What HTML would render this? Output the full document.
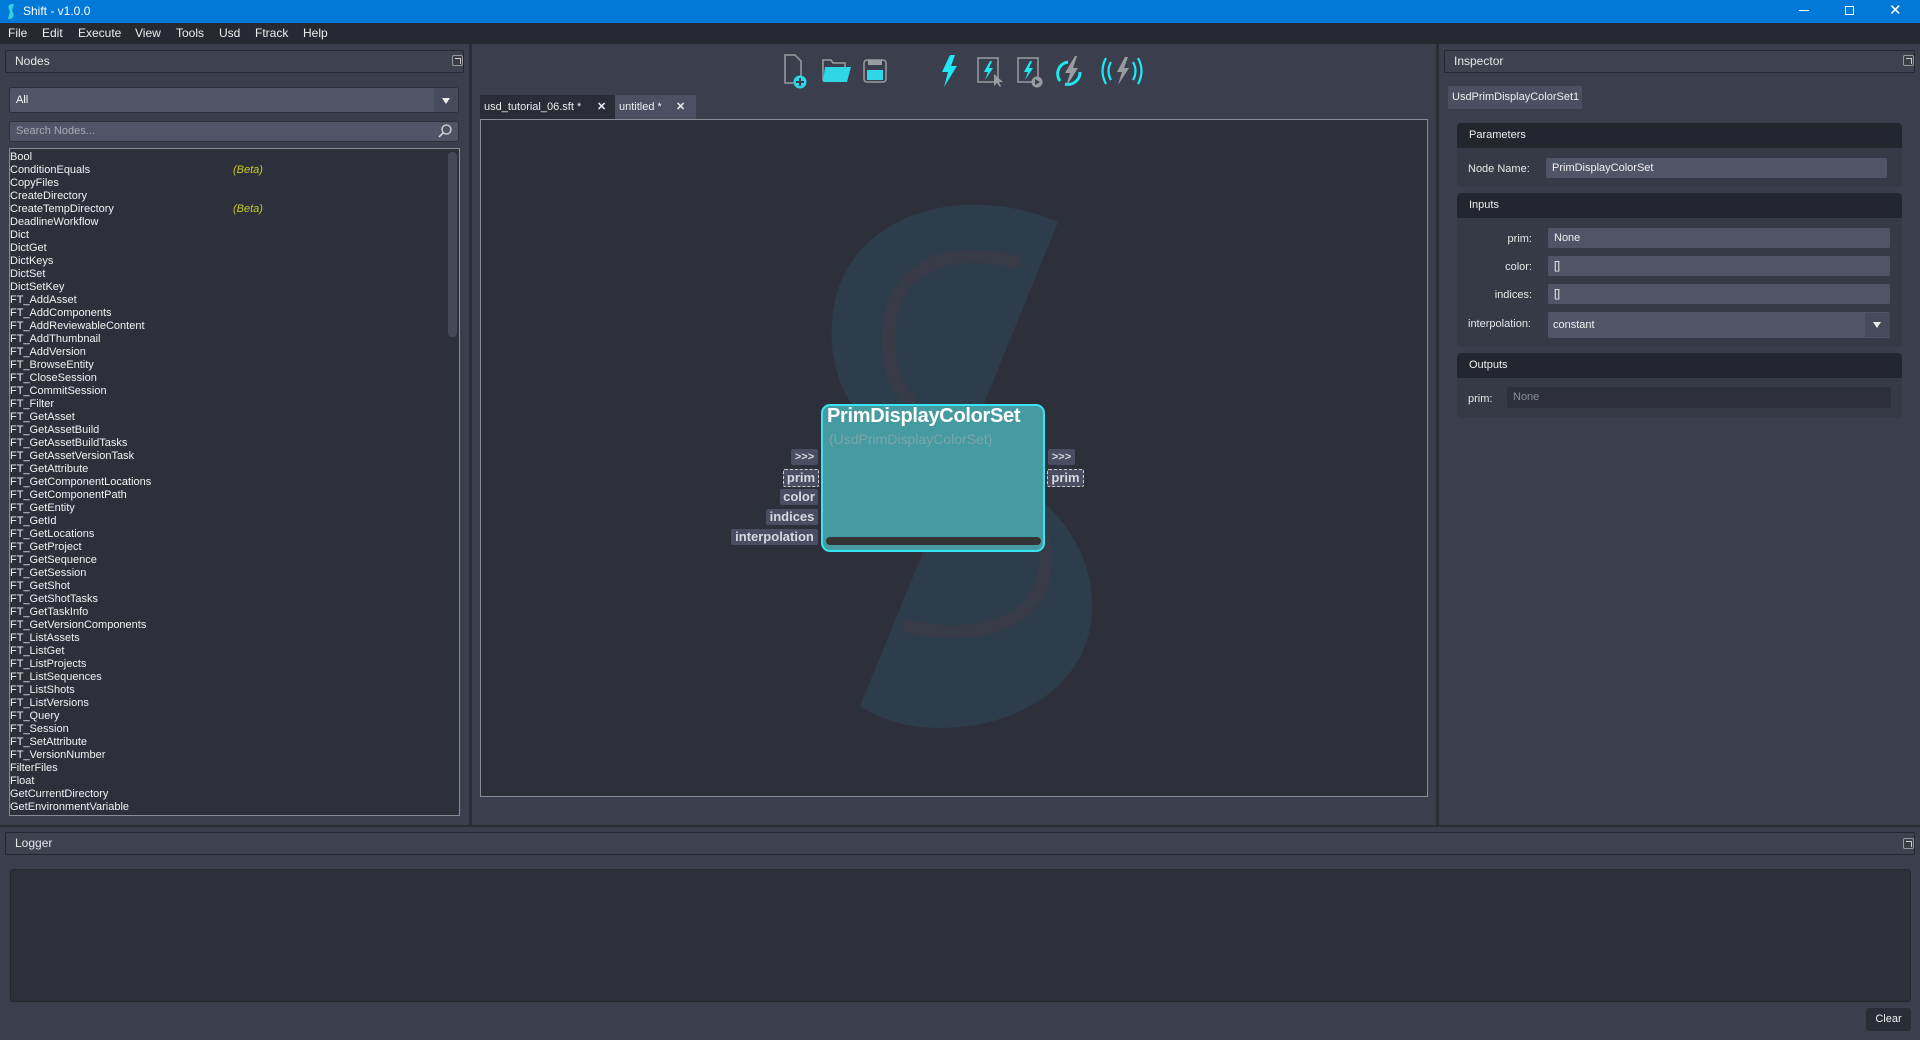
<!DOCTYPE html>
<html><head><meta charset="utf-8">
<style>
*{box-sizing:border-box;margin:0;padding:0}
body{width:1920px;height:1040px;background:#3b3f4d;font-family:"Liberation Sans",sans-serif;color:#fff;position:relative;overflow:hidden;font-size:11px}
.a{position:absolute}
.hdr{position:absolute;background:#3d4150;border:1px solid #24272f;border-radius:2px;font-size:12px;color:#e8e8e8;padding-left:9px;line-height:21px}
.fl{position:absolute;width:11px;height:11px;border:1px solid #999;border-radius:2px;background:#3a3d48}
.fl:after{content:"";position:absolute;left:2px;top:2px;width:5px;height:5px;border-top:1px solid #ccc;border-right:1px solid #ccc}
.li{position:absolute;left:10px;height:13px;line-height:13px;font-size:11px;color:#f2f2f2;white-space:nowrap}
.beta{position:absolute;left:233px;color:#c6c92a;font-style:italic}
.grp{position:absolute;left:1457px;width:445px;background:#363a47;border-radius:4px}
.gh{height:25px;background:#23262f;border-radius:4px 4px 0 0;font-size:11px;line-height:25px;padding-left:12px;color:#eee}
.lab{position:absolute;font-size:11px;color:#e8e8e8;text-align:right}
.fld{position:absolute;background:#4f5467;border-radius:2px;font-size:11px;line-height:20px;padding-left:6px;color:#f0f0f0}
.pin{position:absolute;background:#4b4e63;border-radius:2px;font-family:"Liberation Sans",sans-serif;font-weight:bold;font-size:13px;color:#d8d8e0;line-height:16px;text-align:center;padding:0 2px;white-space:nowrap}
</style></head><body>
<!-- title bar -->
<div class="a" style="left:0;top:0;width:1920px;height:23px;background:#0078d7"></div>
<svg class="a" style="left:6px;top:3px" width="10" height="17"><path d="M8 1 C2 0 1 5 4 8 L2 16 C8 17 9 11 6 8 Z" fill="#2fd0e0"/></svg>
<div class="a" style="left:23px;top:4px;font-size:12px;color:#fff">Shift - v1.0.0</div>
<div class="a" style="left:1799px;top:10px;width:10px;height:1px;background:#fff"></div>
<div class="a" style="left:1845px;top:6px;width:9px;height:9px;border:1px solid #fff"></div>
<div class="a" style="left:1889px;top:1px;font-size:15px;color:#fff">✕</div>
<!-- menu -->
<div class="a" style="left:0;top:23px;width:1920px;height:21px;background:#262932"></div>
<div class="a" style="top:26px;left:8px;font-size:12px;color:#eee">
<span style="position:absolute;left:0">File</span><span style="position:absolute;left:34px">Edit</span><span style="position:absolute;left:70px">Execute</span><span style="position:absolute;left:127px">View</span><span style="position:absolute;left:168px">Tools</span><span style="position:absolute;left:211px">Usd</span><span style="position:absolute;left:247px">Ftrack</span><span style="position:absolute;left:295px">Help</span></div>
<!-- splitters -->
<div class="a" style="left:469px;top:44px;width:3px;height:782px;background:#2a2d36"></div>
<div class="a" style="left:1436px;top:44px;width:3px;height:782px;background:#2a2d36"></div>
<div class="a" style="left:0;top:825px;width:1920px;height:2px;background:#2a2d36"></div>

<!-- Nodes panel -->
<div class="hdr" style="left:5px;top:50px;width:459px;height:23px">Nodes</div>
<div class="fl" style="left:452px;top:55px"></div>
<div class="a" style="left:9px;top:87px;width:450px;height:26px;background:#4f5466;border:1px solid #2c2f39;border-radius:3px;font-size:11px;line-height:24px;padding-left:6px">All</div>
<div class="a" style="left:434px;top:88px;width:24px;height:24px;background:#464a5a"></div>
<div class="a" style="left:442px;top:98px;width:0;height:0;border-left:4px solid transparent;border-right:4px solid transparent;border-top:6px solid #eee"></div>
<div class="a" style="left:9px;top:121px;width:450px;height:21px;background:#4f5466;border:1px solid #2c2f39;border-radius:3px;font-size:11px;line-height:19px;padding-left:6px;color:#a8abb5">Search Nodes...</div>
<svg class="a" style="left:437px;top:123px" width="16" height="16"><circle cx="9.5" cy="6.5" r="4.5" fill="none" stroke="#ddd" stroke-width="1.3"/><path d="M6.3 9.7 L2 14" stroke="#ddd" stroke-width="1.5"/></svg>
<div class="a" style="left:9px;top:148px;width:451px;height:668px;background:#2d303b;border:1px solid #8a8d96"></div>
<div class="a" style="left:448px;top:152px;width:9px;height:185px;background:#454957;border-radius:4px"></div>
<div class="li" style="top:151px">Bool</div>
<div class="li" style="top:164px;width:300px">ConditionEquals<span class="beta" style="left:223px">(Beta)</span></div>
<div class="li" style="top:177px">CopyFiles</div>
<div class="li" style="top:190px">CreateDirectory</div>
<div class="li" style="top:203px;width:300px">CreateTempDirectory<span class="beta" style="left:223px">(Beta)</span></div>
<div class="li" style="top:216px">DeadlineWorkflow</div>
<div class="li" style="top:229px">Dict</div>
<div class="li" style="top:242px">DictGet</div>
<div class="li" style="top:255px">DictKeys</div>
<div class="li" style="top:268px">DictSet</div>
<div class="li" style="top:281px">DictSetKey</div>
<div class="li" style="top:294px">FT_AddAsset</div>
<div class="li" style="top:307px">FT_AddComponents</div>
<div class="li" style="top:320px">FT_AddReviewableContent</div>
<div class="li" style="top:333px">FT_AddThumbnail</div>
<div class="li" style="top:346px">FT_AddVersion</div>
<div class="li" style="top:359px">FT_BrowseEntity</div>
<div class="li" style="top:372px">FT_CloseSession</div>
<div class="li" style="top:385px">FT_CommitSession</div>
<div class="li" style="top:398px">FT_Filter</div>
<div class="li" style="top:411px">FT_GetAsset</div>
<div class="li" style="top:424px">FT_GetAssetBuild</div>
<div class="li" style="top:437px">FT_GetAssetBuildTasks</div>
<div class="li" style="top:450px">FT_GetAssetVersionTask</div>
<div class="li" style="top:463px">FT_GetAttribute</div>
<div class="li" style="top:476px">FT_GetComponentLocations</div>
<div class="li" style="top:489px">FT_GetComponentPath</div>
<div class="li" style="top:502px">FT_GetEntity</div>
<div class="li" style="top:515px">FT_GetId</div>
<div class="li" style="top:528px">FT_GetLocations</div>
<div class="li" style="top:541px">FT_GetProject</div>
<div class="li" style="top:554px">FT_GetSequence</div>
<div class="li" style="top:567px">FT_GetSession</div>
<div class="li" style="top:580px">FT_GetShot</div>
<div class="li" style="top:593px">FT_GetShotTasks</div>
<div class="li" style="top:606px">FT_GetTaskInfo</div>
<div class="li" style="top:619px">FT_GetVersionComponents</div>
<div class="li" style="top:632px">FT_ListAssets</div>
<div class="li" style="top:645px">FT_ListGet</div>
<div class="li" style="top:658px">FT_ListProjects</div>
<div class="li" style="top:671px">FT_ListSequences</div>
<div class="li" style="top:684px">FT_ListShots</div>
<div class="li" style="top:697px">FT_ListVersions</div>
<div class="li" style="top:710px">FT_Query</div>
<div class="li" style="top:723px">FT_Session</div>
<div class="li" style="top:736px">FT_SetAttribute</div>
<div class="li" style="top:749px">FT_VersionNumber</div>
<div class="li" style="top:762px">FilterFiles</div>
<div class="li" style="top:775px">Float</div>
<div class="li" style="top:788px">GetCurrentDirectory</div>
<div class="li" style="top:801px">GetEnvironmentVariable</div>

<!-- toolbar icons -->
<svg class="a" style="left:0;top:52px" width="1200" height="40">
 <g transform="translate(778,0)">
 <path d="M7 3 H17 L23 9 V31 H7 Z" fill="#3b3f4d" stroke="#9a9ca4" stroke-width="1.5"/>
 <circle cx="22" cy="30" r="6.5" fill="#2fd6e6"/><path d="M22 26 V34 M18 30 H26" stroke="#3b3f4d" stroke-width="2"/>
 </g>
 <g transform="translate(789,0)">
 <path d="M34 8 H42 L44 11 H56 V28 H34 Z" fill="#3b3f4d" stroke="#9a9ca4" stroke-width="1.5"/>
 <path d="M36 15 H62 L58 30 H34 Z" fill="#2fd6e6"/>
 </g>
 <g transform="translate(799,0)">
 <rect x="65" y="8" width="22" height="22" rx="3" fill="#3b3f4d" stroke="#9a9ca4" stroke-width="1.5"/>
 <rect x="69" y="8" width="14" height="5" fill="#9a9ca4"/>
 <rect x="68" y="18" width="16" height="10" fill="#2fd6e6"/>
 </g>
 <g transform="translate(817,0)">
 <path d="M133 3 L125 20 H131 L127 35 L140 14 H134 L138 3 Z" fill="#1ee8f4"/>
 </g>
 <g transform="translate(828,0)">
 <rect x="150" y="6" width="20" height="24" fill="#3b3f4d" stroke="#9a9ca4" stroke-width="1.5"/>
 <path d="M162 9 L156 20 H160 L157 28 L165 16 H161 L164 9 Z" fill="#1ee8f4"/>
 <path d="M166 22 L166 34 L169 31 L172 35 L173 34 L171 30 L175 30 Z" fill="#9a9ca4"/>
 </g>
 <g transform="translate(838,0)">
 <rect x="180" y="6" width="20" height="24" fill="#3b3f4d" stroke="#9a9ca4" stroke-width="1.5"/>
 <path d="M192 9 L186 20 H190 L187 28 L195 16 H191 L194 9 Z" fill="#1ee8f4"/>
 <circle cx="199" cy="30" r="5.5" fill="#9a9ca4"/><path d="M197 27 L202 30 L197 33 Z" fill="#3b3f4d"/>
 </g>
 <g transform="translate(844,0)">
 <path d="M224 10 A12 12 0 0 0 216 29" fill="none" stroke="#1ee8f4" stroke-width="3"/>
 <path d="M221 32 A12 12 0 0 0 236 20" fill="none" stroke="#1ee8f4" stroke-width="3"/>
 <path d="M231 4 L221 21 H226 L222 35 L234 16 H229 L233 4 Z" fill="#9a9ca4"/>
 </g>
 <g transform="translate(865,0)">
 <path d="M260 5 L252 20 H257 L253 33 L264 16 H259 L263 5 Z" fill="#9a9ca4"/>
 <path d="M246 10 Q241 19 246 28 M241 6 Q234 19 241 32" fill="none" stroke="#1ee8f4" stroke-width="2.2"/>
 <path d="M268 10 Q273 19 268 28 M273 6 Q280 19 273 32" fill="none" stroke="#1ee8f4" stroke-width="2.2"/>
 </g>
</svg>

<!-- tabs -->
<div class="a" style="left:480px;top:95px;width:135px;height:24px;background:#2a2d38;font-size:11px;line-height:24px;padding-left:4px;color:#eee">usd_tutorial_06.sft *<span style="position:absolute;left:117px;font-weight:bold">✕</span></div>
<div class="a" style="left:615px;top:95px;width:81px;height:24px;background:#4b4f61;font-size:11px;line-height:24px;padding-left:4px;color:#eee">untitled *<span style="position:absolute;left:61px;font-weight:bold">✕</span></div>
<!-- canvas -->
<div class="a" style="left:480px;top:119px;width:948px;height:678px;background:#2d303b;border:1px solid #8a8d96;overflow:hidden">
<svg width="948" height="678" style="position:absolute;left:-481px;top:-120px;overflow:visible">
 <path d="M1058 222 C960 180 840 215 832 320 C826 405 880 452 960 462 Z" fill="#2d3d4b"/>
 <path d="M960 462 C1040 478 1095 540 1092 612 C1088 692 1005 735 920 727 C895 724 876 716 860 706 Z" fill="#2d3d4b"/>
 <path d="M960 462 L1058 222 L1054 220 L956 460 Z" fill="#2d3d4b"/>
 <path d="M1015 262 C960 248 900 258 890 320 C885 360 895 390 910 400" fill="none" stroke="#383b48" stroke-width="13" stroke-linecap="round"/>
 <path d="M908 626 C960 640 1030 630 1043 580 C1050 545 1040 520 1030 510" fill="none" stroke="#383b48" stroke-width="13" stroke-linecap="round"/>
</svg>
</div>

<!-- node -->
<div class="a" style="left:821px;top:404px;width:224px;height:148px;background:#469ba3;border:2px solid #38e4f0;border-radius:9px"></div>
<div class="a" style="left:827px;top:405px;font-family:'Liberation Sans',sans-serif;font-weight:bold;font-size:20px;color:#fff;letter-spacing:-0.3px">PrimDisplayColorSet</div>
<div class="a" style="left:829px;top:431px;font-family:'Liberation Sans',sans-serif;font-size:14px;color:#7fa3a8">(UsdPrimDisplayColorSet)</div>
<div class="a" style="left:826px;top:537px;width:215px;height:8px;background:#333;border-radius:4px"></div>
<div class="pin" style="left:791px;top:449px;width:27px;font-size:11px">&gt;&gt;&gt;</div>
<div class="pin" style="left:783px;top:469px;width:36px;border:1px dashed #ccc">prim</div>
<div class="pin" style="left:780px;top:489px;width:38px">color</div>
<div class="pin" style="left:766px;top:509px;width:52px">indices</div>
<div class="pin" style="left:731px;top:529px;width:87px">interpolation</div>
<div class="pin" style="left:1048px;top:449px;width:27px;font-size:11px">&gt;&gt;&gt;</div>
<div class="pin" style="left:1047px;top:469px;width:37px;border:1px dashed #ccc">prim</div>

<!-- Inspector -->
<div class="hdr" style="left:1444px;top:50px;width:471px;height:23px">Inspector</div>
<div class="fl" style="left:1903px;top:55px"></div>
<div class="a" style="left:1448px;top:86px;width:134px;height:23px;background:#4b4f61;font-size:11px;line-height:23px;padding-left:4px;color:#eee">UsdPrimDisplayColorSet1</div>
<div class="grp" style="top:123px;height:64px"><div class="gh">Parameters</div></div>
<div class="lab" style="left:1468px;top:163px">Node Name:</div>
<div class="fld" style="left:1546px;top:158px;width:341px;height:20px">PrimDisplayColorSet</div>
<div class="grp" style="top:193px;height:154px"><div class="gh">Inputs</div></div>
<div class="lab" style="left:1500px;top:233px;width:32px">prim:</div>
<div class="fld" style="left:1548px;top:228px;width:342px;height:20px">None</div>
<div class="lab" style="left:1500px;top:261px;width:32px">color:</div>
<div class="fld" style="left:1548px;top:256px;width:342px;height:20px">[]</div>
<div class="lab" style="left:1480px;top:289px;width:52px">indices:</div>
<div class="fld" style="left:1548px;top:284px;width:342px;height:20px">[]</div>
<div class="lab" style="left:1468px;top:318px">interpolation:</div>
<div class="fld" style="left:1548px;top:312px;width:342px;height:26px;line-height:26px;padding-left:5px">constant</div>
<div class="a" style="left:1865px;top:313px;width:25px;height:24px;background:#464a5a"></div>
<div class="a" style="left:1873px;top:322px;width:0;height:0;border-left:4px solid transparent;border-right:4px solid transparent;border-top:6px solid #eee"></div>
<div class="grp" style="top:353px;height:65px"><div class="gh">Outputs</div></div>
<div class="lab" style="left:1468px;top:393px">prim:</div>
<div class="fld" style="left:1507px;top:387px;width:384px;height:21px;background:#2d303b;color:#8a8d96">None</div>

<!-- Logger -->
<div class="hdr" style="left:5px;top:832px;width:1910px;height:23px">Logger</div>
<div class="fl" style="left:1903px;top:838px"></div>
<div class="a" style="left:10px;top:869px;width:1901px;height:133px;background:#2d303b;border:1px solid #24272f;border-radius:3px"></div>
<div class="a" style="left:1866px;top:1008px;width:45px;height:23px;background:#2a2d38;border-radius:3px;font-size:11px;line-height:23px;text-align:center;color:#eee">Clear</div>
</body></html>
